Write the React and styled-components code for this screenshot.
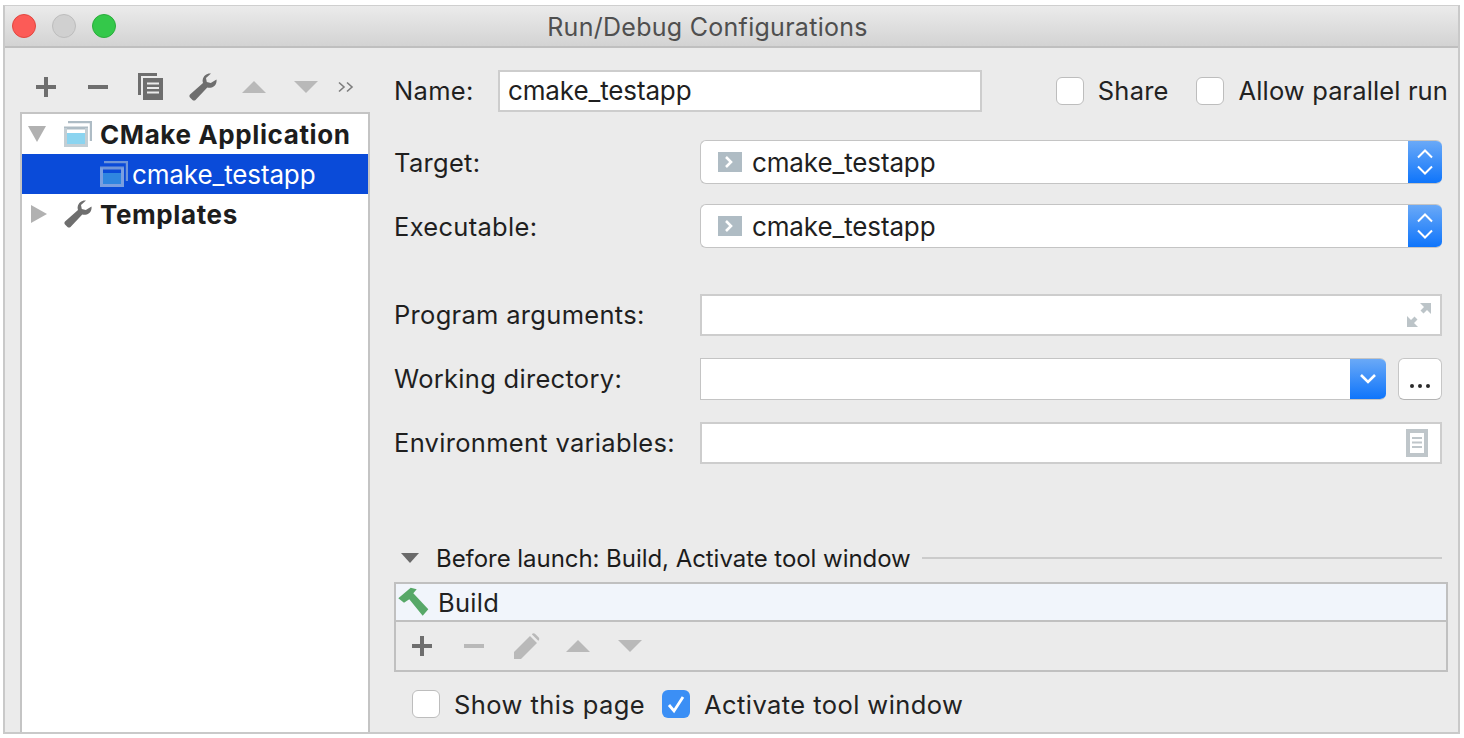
import React from "react";
import styled, { createGlobalStyle } from "styled-components";

const Global = createGlobalStyle`
  html, body { margin: 0; padding: 0; background: #fff; overflow: hidden; }
  body { font-family: "Inter", "Liberation Sans", sans-serif; color: #1f1f1f; }
  * { box-sizing: border-box; }
`;

const Page = styled.div`
  width: 1464px; height: 738px; padding: 5px 3px 3px 3px; background: #fff;
`;
const Window = styled.div`
  width: 1457px; height: 729px; display: flex; flex-direction: column;
  background: #ebebeb; border: 2px solid #c9c9c9; border-top: 1px solid #cfcfcf; overflow: hidden;
`;
const TitleBar = styled.div`
  position: relative; flex: none; height: 42px; display: flex; align-items: center; justify-content: center;
  padding: 2px 48px 0 0;
  background: linear-gradient(#ebebeb, #d3d3d3); border-bottom: 2px solid #bfbfbf;
  font-size: 25px; color: #4f4f4f; letter-spacing: 0.28px;
`;
const Lights = styled.div`
  position: absolute; left: 7px; top: 8px; display: flex; gap: 16px;
`;
const Light = styled.span`
  width: 24px; height: 24px; border-radius: 50%; background: ${p => p.$c}; border: 1px solid ${p => p.$b};
`;
const Body = styled.div`
  flex: 1; display: flex; min-height: 0;
`;
const Side = styled.div`
  flex: none; width: 365px; padding: 0 0 0 15px; display: flex; flex-direction: column;
`;
const SideTools = styled.div`
  flex: none; height: 64px; padding: 21px 0 0 15px; display: flex; align-items: flex-start;
`;
const ToolSlot = styled.span`
  flex: none; width: ${p => p.$w || 52}px; height: 36px; display: flex; align-items: center; justify-content: flex-start;
`;
const Tree = styled.div`
  flex: 1; background: #fff; border: 2px solid #c4c4c4; border-bottom: 0; width: 350px;
`;
const Row = styled.div`
  height: 40px; display: flex; align-items: center; padding-left: ${p => p.$pl || 8}px; font-size: 26px;
  font-weight: ${p => (p.$bold ? 700 : 400)}; background: ${p => (p.$sel ? "#0a4bd9" : "transparent")};
  color: ${p => (p.$sel ? "#fff" : "#1d1d1d")}; letter-spacing: ${p => (p.$bold ? "0.6px" : "-0.13px")};
`;
const TreeIcon = styled.span`
  flex: none; width: ${p => p.$w}px; display: flex; align-items: center;
`;
const Main = styled.div`
  flex: 1; padding: 22px 0 0 24px; display: flex; flex-direction: column; min-width: 0;
`;
const NameRow = styled.div`
  height: 42px; display: flex; align-items: center; margin-bottom: 28px; width: 1054px;
`;
const Label = styled.span`
  flex: none; width: ${p => p.$w || 306}px; font-size: 25.5px; letter-spacing: 0.3px; color: #1f1f1f;
  margin-bottom: ${p => (p.$up ? 1 : 0)}px;
`;
const TextBox = styled.div`
  height: 42px; width: ${p => (p.$w ? p.$w + "px" : "auto")}; flex: ${p => (p.$w ? "none" : 1)};
  background: #fff; border: 2px solid #cdcdcd; font-size: 26px; letter-spacing: -0.13px;
  display: flex; align-items: center; justify-content: space-between; padding: 0 ${p => p.$pr || 8}px 1px 8px; color: #1f1f1f;
`;
const Check = styled.span`
  flex: none; width: 28px; height: 28px; margin-left: ${p => p.$ml || 0}px; border-radius: 6px;
  display: flex; align-items: center; justify-content: center;
  background: ${p => (p.$on ? "#3b8ff5" : "#fff")}; border: ${p => (p.$on ? "0" : "1px solid #bdbdbd")};
`;
const CheckLabel = styled.span`
  flex: none; margin-left: ${p => p.$ml || 14}px; margin-bottom: ${p => (p.$up ? 1 : 0)}px; font-size: 25.5px;
  letter-spacing: ${p => p.$ls ?? 0.42}px; color: #222;
`;
const Spacer = styled.span` flex: 1; `;
const FormRow = styled.div`
  height: ${p => p.$h || 42}px; display: flex; align-items: center; margin-bottom: ${p => p.$mb || 0}px; width: 1048px;
`;
const Combo = styled.div`
  flex: 1; height: 44px; display: flex; align-items: stretch; border-radius: 6px; background: #fff;
  border: 1px solid #c4c4c4; border-right: 0; overflow: hidden; font-size: 26px; letter-spacing: -0.13px; color: #1f1f1f;
`;
const ComboText = styled.div`
  flex: 1; display: flex; align-items: center; padding-left: 17px; gap: 10px;
`;
const BlueCap = styled.div`
  flex: none; width: ${p => p.$w || 34}px; background: linear-gradient(#6aa9f7, #0f75fb); display: flex; align-items: center; justify-content: center;
`;
const DirBox = styled.div`
  flex: none; width: 686px; height: 42px; display: flex; background: #fff; border: 1px solid #c4c4c4; border-right: 0;
  border-radius: 0 6px 6px 0; overflow: hidden;
`;
const DirFill = styled.div` flex: 1; `;
const Dots = styled.button`
  flex: none; margin-left: 12px; width: 44px; height: 42px; padding: 0; background: #fff; border: 1px solid #c6c6c6;
  border-bottom-color: #b4b4b4; border-radius: 6px; display: flex; align-items: flex-end; justify-content: center;
`;
const Section = styled.div`
  height: 42px; margin: 73px 0 3px; width: 1048px; display: flex; align-items: center; padding-left: 7px;
`;
const SectionTitle = styled.span`
  flex: none; margin-left: 17px; font-size: 24px; letter-spacing: -0.05px; color: #1c1c1c;
`;
const Rule = styled.span`
  flex: 1; height: 2px; margin-left: 11px; background: #cbcbcb;
`;
const BuildBox = styled.div`
  width: 1054px; height: 90px; border: 2px solid #c0c0c0; display: flex; flex-direction: column;
`;
const BuildRow = styled.div`
  flex: none; height: 36px; background: #f1f5fb; display: flex; align-items: center; padding-left: 2px;
  font-size: 25.5px; letter-spacing: 0.3px; color: #222; gap: 9px;
`;
const BuildTools = styled.div`
  flex: 1; border-top: 2px solid #c0c0c0; display: flex; align-items: center; padding-left: 15px;
`;
const Bottom = styled.div`
  display: flex; align-items: center; height: 28px; margin-top: 18px; padding-left: 18px;
`;

const G = "#6e6e6e";
const L = "#b9b9b9";

const Plus = ({ c = G }) => (
  <svg width="22" height="22" viewBox="0 0 22 22"><path d="M9 1h4v8h8v4h-8v8H9v-8H1V9h8z" fill={c} /></svg>
);
const Minus = ({ c = G }) => (
  <svg width="22" height="22" viewBox="0 0 22 22"><rect x="1" y="9" width="20" height="4" fill={c} /></svg>
);
const Up = () => (
  <svg width="24" height="14" viewBox="0 0 24 14"><path d="M12 1 24 13H0z" fill={L} /></svg>
);
const Down = () => (
  <svg width="24" height="14" viewBox="0 0 24 14"><path d="M0 1h24L12 13z" fill={L} /></svg>
);
const Copy = () => (
  <svg width="26" height="28" viewBox="0 0 26 28">
    <path d="M0 0h19v3H3v19H0z" fill={G} />
    <path d="M5 5h20v22H5z" fill={G} />
    <path d="M9 10.5h12M9 15h12M9 19.5h12" stroke="#ebebeb" strokeWidth="2" />
  </svg>
);
const Wrench = ({ size = 28 }) => (
  <svg width={size} height={size} viewBox="0 0 28 28">
    <path d="M27.5 6.500c.6 4-2 7.600-6 8.200-1.100.2-2.200.1-3.200-.2L6.500 27c-.9.800-2.200.700-3-.1L1 24.400c-.8-.8-.8-2.100 0-2.900L14 10c-.4-1-.5-2.200-.3-3.300C14.400 2.700 18 .1 22 .6l-5 4.500.8 4 4 .9z" fill={G} />
  </svg>
);
const Chevrons = () => (
  <svg width="16" height="12" viewBox="0 0 16 12" fill="none" stroke="#7d7d7d" strokeWidth="1.600">
    <path d="M1 1.500 6 6l-5 4.500M9 1.500 14 6l-5 4.500" />
  </svg>
);
const Pencil = () => (
  <svg width="28" height="28" viewBox="0 0 28 28">
    <path d="M1 20 17 4l7 7L8 27H1zM19 2c1-1 2.300-1 3.200 0l3.300 3.300c1 1 1 2.300 0 3.200L25.500 9 19 2.500z" fill={L} />
  </svg>
);
const ConfigIcon = ({ back, frame, fill }) => (
  <svg width="28" height="26" viewBox="0 0 28 26" fill="none">
    <path d="M4 1h23v19" stroke={back} strokeWidth="2.400" />
    <path d="M0 7h24" stroke={back} strokeWidth="3" />
    <path d="M1.500 7v17.500h21V7" stroke={frame} strokeWidth="3" />
    <rect x="3" y="12" width="18" height="11" fill={fill} />
  </svg>
);
const ExecIcon = () => (
  <svg width="24" height="20" viewBox="0 0 24 20" style={{ flex: "none" }}>
    <rect width="24" height="20" fill="#afbcc4" />
    <path d="M8 5 13 10 8 15" fill="none" stroke="#fff" strokeWidth="2.600" />
  </svg>
);
const Tri = ({ dir }) => (
  <svg width="18" height="18" viewBox="0 0 18 18">
    {dir === "down" ? <path d="M0 1h18L9 17z" fill="#b1b1b1" /> : <path d="M1 0 17 9 1 18z" fill="#b1b1b1" />}
  </svg>
);
const DarkTri = () => (
  <svg width="18" height="10" viewBox="0 0 18 10" style={{ flex: "none" }}><path d="M0 0h18L9 10z" fill="#6a6a6a" /></svg>
);
const UpDown = () => (
  <svg width="18" height="30" viewBox="0 0 18 30" fill="none" stroke="#fff" strokeWidth="2">
    <path d="M2 10.500 9 3.500l7 7M2 19.500l7 7 7-7" />
  </svg>
);
const Expand = () => (
  <svg width="26" height="26" viewBox="0 0 26 26" fill="#bcc4c8">
    <path d="M14 1h11v11l-4-4-3.500 3.500-3-3L18 5zM1 14v11h11l-4-4 3.500-3.500-3-3L5 18z" />
  </svg>
);
const DocIcon = () => (
  <svg width="22" height="28" viewBox="0 0 22 28">
    <rect width="22" height="28" fill="#bfc6ca" />
    <rect x="4" y="4" width="14" height="20" fill="#fff" />
    <path d="M6 9h10M6 13.500h10M6 18h10" stroke="#bfc6ca" strokeWidth="2" />
  </svg>
);
const Hammer = () => (
  <svg width="31" height="30" viewBox="0 0 31 30" style={{ flex: "none" }}>
    <path d="M.3 11.300 12.700.7l6 1.600-3.400 4 15 16-5.600 6.400-13.400-16.400L6 15.700z" fill="#57a868" />
  </svg>
);
const Tick = () => (
  <svg width="20" height="20" viewBox="0 0 20 20" fill="none" stroke="#fff" strokeWidth="2.800">
    <path d="M3 11l5 6L17 3" />
  </svg>
);

export default function App() {
  return (
    <Page>
      <Global />
      <Window>
        <TitleBar>
          <Lights>
            <Light $c="#fc5b57" $b="#e2463f" />
            <Light $c="#d0d0d0" $b="#bdbdbd" />
            <Light $c="#34c84a" $b="#2aad3b" />
          </Lights>
          Run/Debug Configurations
        </TitleBar>
        <Body>
          <Side>
            <SideTools>
              <ToolSlot><Plus /></ToolSlot>
              <ToolSlot $w={51}><Minus /></ToolSlot>
              <ToolSlot $w={51}><Copy /></ToolSlot>
              <ToolSlot $w={53}><Wrench /></ToolSlot>
              <ToolSlot><Up /></ToolSlot>
              <ToolSlot $w={44}><Down /></ToolSlot>
              <ToolSlot $w={20}><Chevrons /></ToolSlot>
            </SideTools>
            <Tree>
              <Row $bold $pl={6}>
                <TreeIcon $w={36}><Tri dir="down" /></TreeIcon>
                <TreeIcon $w={36}><ConfigIcon back="#aebcc5" frame="#c3ced4" fill="#8bd4f0" /></TreeIcon>
                CMake Application
              </Row>
              <Row $sel $pl={78}>
                <TreeIcon $w={32}><ConfigIcon back="#6f95d8" frame="#7a9fe0" fill="#2f86e0" /></TreeIcon>
                cmake_testapp
              </Row>
              <Row $bold $pl={8}>
                <TreeIcon $w={34}><Tri dir="right" /></TreeIcon>
                <TreeIcon $w={36}><Wrench /></TreeIcon>
                Templates
              </Row>
            </Tree>
          </Side>
          <Main>
            <NameRow>
              <Label $w={104} $up>Name:</Label>
              <TextBox $w={484}>cmake_testapp</TextBox>
              <Spacer />
              <Check />
              <CheckLabel $up $ls={0.2}>Share</CheckLabel>
              <Check $ml={27} />
              <CheckLabel $up $ml={15} $ls={0.12}>Allow parallel run</CheckLabel>
            </NameRow>
            <FormRow $h={44} $mb={20}>
              <Label>Target:</Label>
              <Combo>
                <ComboText><ExecIcon />cmake_testapp</ComboText>
                <BlueCap><UpDown /></BlueCap>
              </Combo>
            </FormRow>
            <FormRow $h={44} $mb={46}>
              <Label>Executable:</Label>
              <Combo>
                <ComboText><ExecIcon />cmake_testapp</ComboText>
                <BlueCap><UpDown /></BlueCap>
              </Combo>
            </FormRow>
            <FormRow $mb={22}>
              <Label $up>Program arguments:</Label>
              <TextBox><Spacer /><Expand /></TextBox>
            </FormRow>
            <FormRow $mb={22}>
              <Label $up>Working directory:</Label>
              <DirBox>
                <DirFill />
                <BlueCap $w={36}>
                  <svg width="18" height="12" viewBox="0 0 18 12" fill="none" stroke="#fff" strokeWidth="2.600"><path d="M2 2l7 7 7-7" /></svg>
                </BlueCap>
              </DirBox>
              <Dots>
                <svg width="22" height="24" viewBox="0 0 22 24" fill="#2a2a2a">
                  <circle cx="3" cy="11" r="2" /><circle cx="11" cy="11" r="2" /><circle cx="19" cy="11" r="2" />
                </svg>
              </Dots>
            </FormRow>
            <FormRow>
              <Label $up>Environment variables:</Label>
              <TextBox $pr={12}><Spacer /><DocIcon /></TextBox>
            </FormRow>
            <Section>
              <DarkTri />
              <SectionTitle>Before launch: Build, Activate tool window</SectionTitle>
              <Rule />
            </Section>
            <BuildBox>
              <BuildRow><Hammer />Build</BuildRow>
              <BuildTools>
                <ToolSlot><Plus /></ToolSlot>
                <ToolSlot $w={50}><Minus c={L} /></ToolSlot>
                <ToolSlot $w={53}><Pencil /></ToolSlot>
                <ToolSlot><Up /></ToolSlot>
                <ToolSlot><Down /></ToolSlot>
              </BuildTools>
            </BuildBox>
            <Bottom>
              <Check />
              <CheckLabel>Show this page</CheckLabel>
              <Check $on $ml={17}><Tick /></Check>
              <CheckLabel>Activate tool window</CheckLabel>
            </Bottom>
          </Main>
        </Body>
      </Window>
    </Page>
  );
}
